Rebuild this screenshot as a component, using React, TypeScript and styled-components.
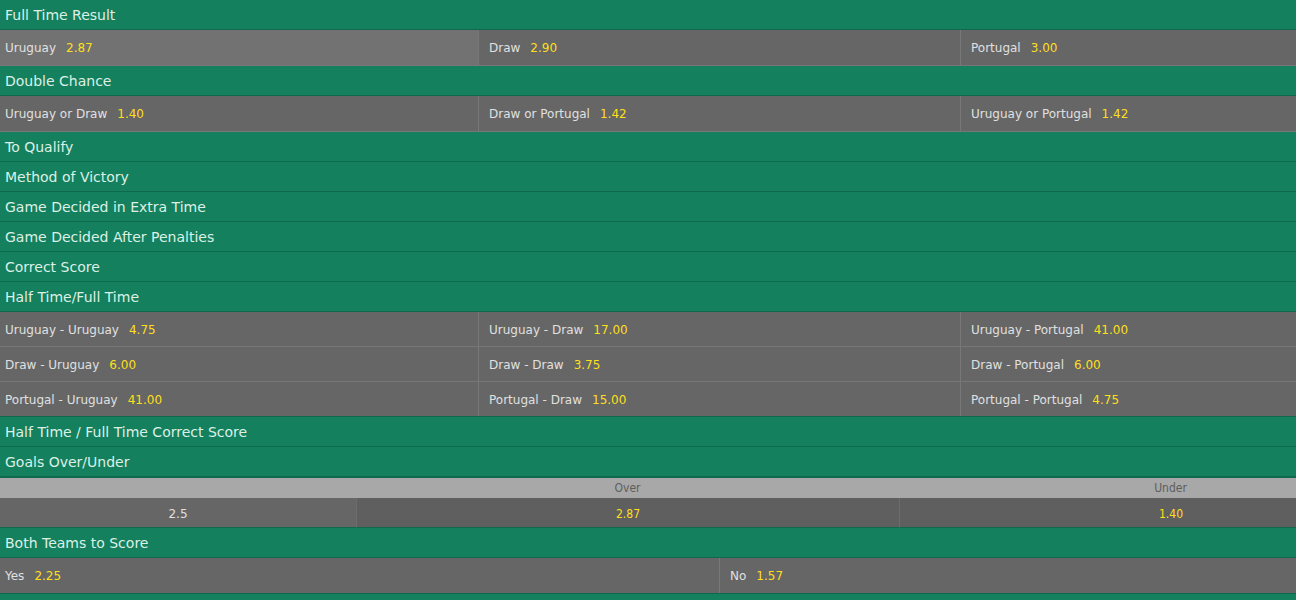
import styled, { createGlobalStyle } from "styled-components";

const GlobalStyle = createGlobalStyle`
  html, body {
    margin: 0;
    padding: 0;
    background: #14805e;
  }
  body {
    font-family: "DejaVu Sans", Tahoma, Verdana, sans-serif;
  }
`;

const Page = styled.div`
  width: 1296px;
  overflow: hidden;
  background: #14805e;
  min-height: 600px;
`;

const MarketHeader = styled.div`
  height: 27px;
  padding-top: 2px;
  line-height: 27px;
  padding-left: 5px;
  font-size: 14px;
  color: #dcf0e6;
  background: #14805e;
  border-bottom: 1px solid #0e6a4d;
  white-space: nowrap;
`;

const OddsRow = styled.div<{ $cols: number; $single?: boolean }>`
  display: grid;
  grid-template-columns: ${(p) => (p.$cols === 3 ? "478px 482px 1fr" : "719px 1fr")};
  height: ${(p) => (p.$single ? "35px" : "34px")};
  background: #666666;
  border-bottom: 1px solid #777777;
  &:last-child {
    border-bottom-color: #0e6a4d;
  }
`;

const Cell = styled.div<{ $hover?: boolean; $nudge?: boolean }>`
  display: flex;
  align-items: center;
  padding-left: 5px;
  padding-top: ${(p) => (p.$nudge ? "2px" : "0")};
  font-size: 12px;
  color: #e0e0e0;
  white-space: nowrap;
  background: ${(p) => (p.$hover ? "#727272" : "transparent")};
  & + & {
    border-left: 1px solid #787878;
    padding-left: 10px;
  }
`;

const Odds = styled.span`
  color: #ffdf1b;
  margin-left: 10px;
`;

const OUTable = styled.div`
  display: grid;
  grid-template-columns: 356px 543px 543px;
  width: 1442px;
  border-top: 1px solid #0e6a4d;
`;

const OUHead = styled.div`
  height: 20px;
  line-height: 20px;
  background: #a8a8a8;
  color: #5e5e5e;
  font-family: "DejaVu Sans Condensed", "DejaVu Sans", sans-serif;
  font-size: 12px;
  text-align: center;
`;

const OUCell = styled.div<{ $dark?: boolean; $odds?: boolean }>`
  height: 27px;
  padding-top: 2px;
  line-height: 29px;
  text-align: center;
  font-size: 12px;
  font-family: ${(p) => (p.$odds ? '"DejaVu Sans Condensed", "DejaVu Sans", sans-serif' : "inherit")};
  background: ${(p) => (p.$dark ? "#5f5f5f" : "#666666")};
  color: ${(p) => (p.$odds ? "#ffdf1b" : "#e0e0e0")};
  border-bottom: 1px solid #0e6a4d;
  & + & {
    border-left: 1px solid #6c6c6c;
  }
`;

type Sel = { label: string; odds: string };

const fullTime: Sel[] = [
  { label: "Uruguay", odds: "2.87" },
  { label: "Draw", odds: "2.90" },
  { label: "Portugal", odds: "3.00" },
];

const doubleChance: Sel[] = [
  { label: "Uruguay or Draw", odds: "1.40" },
  { label: "Draw or Portugal", odds: "1.42" },
  { label: "Uruguay or Portugal", odds: "1.42" },
];

const htft: Sel[][] = [
  [
    { label: "Uruguay - Uruguay", odds: "4.75" },
    { label: "Uruguay - Draw", odds: "17.00" },
    { label: "Uruguay - Portugal", odds: "41.00" },
  ],
  [
    { label: "Draw - Uruguay", odds: "6.00" },
    { label: "Draw - Draw", odds: "3.75" },
    { label: "Draw - Portugal", odds: "6.00" },
  ],
  [
    { label: "Portugal - Uruguay", odds: "41.00" },
    { label: "Portugal - Draw", odds: "15.00" },
    { label: "Portugal - Portugal", odds: "4.75" },
  ],
];

const btts: Sel[] = [
  { label: "Yes", odds: "2.25" },
  { label: "No", odds: "1.57" },
];

function Row({ sels, hoverFirst, single }: { sels: Sel[]; hoverFirst?: boolean; single?: boolean }) {
  return (
    <OddsRow $cols={sels.length} $single={single}>
      {sels.map((s, i) => (
        <Cell key={s.label} $hover={hoverFirst && i === 0} $nudge={!single}>
          {s.label}
          <Odds>{s.odds}</Odds>
        </Cell>
      ))}
    </OddsRow>
  );
}

export default function App() {
  return (
    <Page>
      <GlobalStyle />
      <MarketHeader>Full Time Result</MarketHeader>
      <Row sels={fullTime} hoverFirst single />
      <MarketHeader>Double Chance</MarketHeader>
      <Row sels={doubleChance} single />
      <MarketHeader>To Qualify</MarketHeader>
      <MarketHeader>Method of Victory</MarketHeader>
      <MarketHeader>Game Decided in Extra Time</MarketHeader>
      <MarketHeader>Game Decided After Penalties</MarketHeader>
      <MarketHeader>Correct Score</MarketHeader>
      <MarketHeader>Half Time/Full Time</MarketHeader>
      <div>
        {htft.map((r, i) => (
          <Row key={i} sels={r} />
        ))}
      </div>
      <MarketHeader>Half Time / Full Time Correct Score</MarketHeader>
      <MarketHeader>Goals Over/Under</MarketHeader>
      <OUTable>
        <OUHead />
        <OUHead>Over</OUHead>
        <OUHead>Under</OUHead>
        <OUCell>2.5</OUCell>
        <OUCell $dark $odds>2.87</OUCell>
        <OUCell $dark $odds>1.40</OUCell>
      </OUTable>
      <MarketHeader>Both Teams to Score</MarketHeader>
      <Row sels={btts} single />
    </Page>
  );
}
